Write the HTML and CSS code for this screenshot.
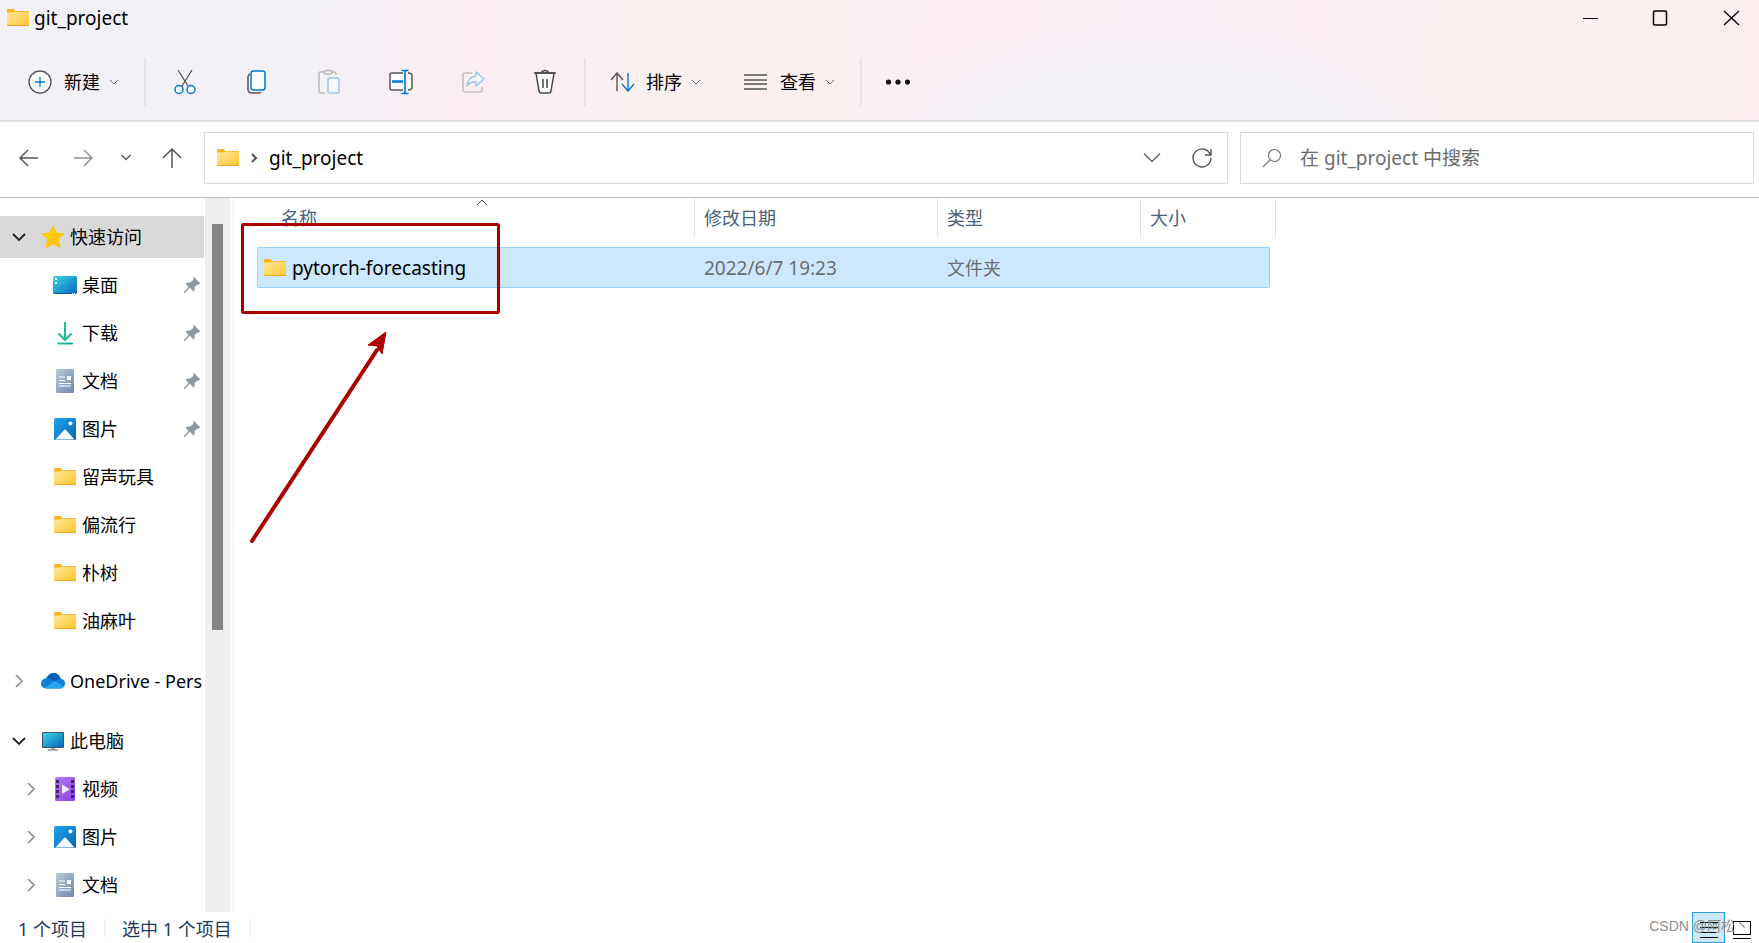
FILE: index.html
```html
<!DOCTYPE html>
<html lang="zh-CN">
<head>
<meta charset="utf-8">
<title>git_project</title>
<link rel="stylesheet" href="styles.css">
</head>
<body>
<svg class="defs" width="0" height="0" aria-hidden="true">
  <defs>
    <linearGradient id="gFolder" x1="0" y1="0" x2="1" y2="1"><stop offset="0" stop-color="#ffe8a0"/><stop offset="1" stop-color="#ffc62f"/></linearGradient>
    <linearGradient id="gScreen" x1="0" y1="0" x2="1" y2="1"><stop offset="0" stop-color="#35d9e4"/><stop offset="1" stop-color="#0a66bd"/></linearGradient>
    <linearGradient id="gDown" x1="0" y1="0" x2="1" y2="0"><stop offset="0" stop-color="#35c98c"/><stop offset="1" stop-color="#12a3a5"/></linearGradient>
    <linearGradient id="gDoc" x1="0" y1="0" x2="1" y2="1"><stop offset="0" stop-color="#b9c9dc"/><stop offset="1" stop-color="#6f8aa8"/></linearGradient>
    <linearGradient id="gPic" x1="0" y1="0" x2="1" y2="1"><stop offset="0" stop-color="#1fa5ec"/><stop offset="1" stop-color="#0a62b8"/></linearGradient>
    <linearGradient id="gVid" x1="0" y1="0" x2="1" y2="1"><stop offset="0" stop-color="#b77bf5"/><stop offset="1" stop-color="#8a3fe0"/></linearGradient>
    <linearGradient id="gStar" x1="0" y1="0" x2="1" y2="1"><stop offset="0" stop-color="#ffe000"/><stop offset="1" stop-color="#ffb41a"/></linearGradient>
    <symbol id="folder" viewBox="0 0 24 20"><path d="M1 3V2q0-1 1-1h5.500l1.500 1.500V5H1z" fill="#fdb51c"/><rect x="1" y="3" width="22" height="15" fill="url(#gFolder)"/><path d="M8 3.500H23" fill="none" stroke="#f5bd3c"/><path d="M1 4.500V1.500h6.500l1 1L7 4.500z" fill="#fdb51c"/><path d="M1 17.500h22" stroke="#f0a51c"/></symbol>
    <symbol id="desktop" viewBox="0 0 24 20"><rect x="0" y="1" width="24" height="18" rx="1.500" fill="url(#gScreen)"/><path d="M2 3h2v2H2zM2 7h2v2H2z" fill="#fff"/><path d="M1 18.500h22" stroke="#075aa0"/><path d="M19 18.500h1M21 18.500h1" stroke="#fff"/></symbol>
    <symbol id="download" viewBox="0 0 24 24"><path d="M12 1v18M5.500 12.500l6.500 6.500 6.500-6.500" fill="none" stroke="#25b894" stroke-width="2"/><rect x="4" y="21.500" width="16" height="2" rx="1" fill="url(#gDown)"/></symbol>
    <symbol id="document" viewBox="0 0 24 24"><rect x="3" y="0" width="18" height="24" rx="1.500" fill="url(#gDoc)"/><path d="M6 8h6M6 11.500h6M6 14.500h12M6 17h12" stroke="#fff" stroke-width="1.200"/><rect x="14" y="7" width="4" height="4" fill="#fff"/></symbol>
    <symbol id="picture" viewBox="0 0 24 24"><rect x="1" y="1" width="22" height="22" rx="1.500" fill="url(#gPic)"/><path d="M2.500 22.500L11 13q1-1 2 0l8.500 9.500z" fill="#f3f9fe"/><circle cx="17.500" cy="6.500" r="2" fill="#fff"/></symbol>
    <symbol id="video" viewBox="0 0 24 24"><rect x="2" y="0" width="20" height="24" rx="1.500" fill="url(#gVid)"/><path d="M4.500 3v20M19.500 3v20" stroke="#402468" stroke-width="3" stroke-dasharray="3 2"/><path d="M9 7.500v9.500l8-4.700z" fill="#f2eaf9"/></symbol>
    <symbol id="star" viewBox="0 0 24 24"><path d="M12 1l3.200 7 7.800.9-5.800 5.100 1.700 8.500L12 18.800 5.100 22.500 6.800 14 1 8.900 8.800 8z" fill="url(#gStar)" stroke="#ffc400" stroke-linejoin="round"/></symbol>
    <symbol id="cloud" viewBox="0 0 24 18"><path d="M5 16.500C1.500 16 0 14 0 11.500 0 8.500 2.500 6.500 5 6.500 6.500 3 9.500 1 12.500 1c3.500 0 6 2 7 5.500 3 .5 4.500 2.500 4.500 5 0 3-2.500 5-5 5z" fill="#0f80d8"/><path d="M6 6C7.500 3 10 1 12.500 1c3.500 0 6 2 7 5.500L14 9z" fill="#0a60b4"/><path d="M3.500 16L14 9l9 5.500q-1.500 2-4 2H6q-1.500 0-2.500-.5z" fill="#28a5ee"/></symbol>
    <symbol id="monitor" viewBox="0 0 24 20"><rect x="1" y="1" width="22" height="16" rx="1" fill="#3f5563"/><rect x="2" y="2" width="20" height="14" fill="url(#gScreen)"/><path d="M10 17h4v1.500h-4z" fill="#9aa5ac"/><path d="M7 19h10" stroke="#566069"/></symbol>
    <symbol id="pin" viewBox="0 0 16 16"><path d="M10 0l6 6-1 1.500-2 .2L10.800 10 10.500 13.500l-1 1-3.800-3.800L1 16H0v-1l4.500-5L1.500 6.800l1-1 4-.6L9.300 3 9 1z" fill="#8e9aa3"/></symbol>
    <symbol id="down" viewBox="0 0 14 14"><path d="M1 4l6 6 6-6" fill="none" stroke="currentColor" stroke-width="1.800"/></symbol>
    <symbol id="right" viewBox="0 0 14 14"><path d="M4 1l6 6-6 6" fill="none" stroke="currentColor" stroke-width="1.600"/></symbol>
    <symbol id="thin" viewBox="0 0 10 10"><path d="M1 3l4 4 4-4" fill="none" stroke="currentColor" stroke-width="1"/></symbol>
  </defs>
</svg>

<div class="window">
  <header class="chrome">
    <div class="titlebar">
      <svg class="ic-folder"><use href="#folder"/></svg>
      <h1 class="title">git_project</h1>
      <div class="controls">
        <button class="control" aria-label="最小化"><svg width="18" height="18"><path d="M2 9.500h15" stroke="#000"/></svg></button>
        <button class="control" aria-label="最大化"><svg width="18" height="18"><rect x="2.500" y="2" width="13" height="14" rx="1.500" fill="none" stroke="#000" stroke-width="1.500"/></svg></button>
        <button class="control" aria-label="关闭"><svg width="18" height="18"><path d="M2 2l15 14M17 2L2 16" stroke="#000" stroke-width="1.300"/></svg></button>
      </div>
    </div>
    <div class="toolbar">
      <button class="tool new"><svg width="24" height="24"><circle cx="12" cy="12" r="11" fill="#fbfbfd" stroke="#555" stroke-width="1.300"/><path d="M12 7v10M7 12h10" stroke="#0078d4" stroke-width="1.300"/></svg><span>新建</span><svg class="ic-thin"><use href="#thin"/></svg></button>
      <span class="rule"></span>
      <div class="icons">
        <button class="tool" aria-label="剪切"><svg width="24" height="26"><path d="M5 1l10 16M19 1L9 17" stroke="#555" stroke-width="1.300"/><g fill="#fbfbfd" stroke="#0078d4" stroke-width="1.500"><circle cx="6" cy="20.500" r="4"/><circle cx="18" cy="20.500" r="4"/></g></svg></button>
        <button class="tool" aria-label="复制"><svg width="24" height="26"><path d="M5 5q-2 1-2 3v12q0 4 4 4h7q1.500 0 2-1" fill="none" stroke="#555" stroke-width="1.500"/><rect x="6" y="2" width="14" height="19" rx="2.500" fill="#fbfbfd" stroke="#0078d4" stroke-width="1.500"/></svg></button>
        <button class="tool" aria-label="粘贴"><svg width="24" height="26"><path d="M7 3H3Q2 3 2 4.500v18Q2 24 3.500 24H8M14 3h3.500q1.500 0 1.500 3" fill="none" stroke="#bdb9c0" stroke-width="1.500"/><rect x="7" y="1.500" width="8" height="3.500" rx="1.700" fill="none" stroke="#bdb9c0" stroke-width="1.500"/><rect x="11" y="9" width="11" height="15" rx="1.500" fill="#f8f8fc" stroke="#99c8ee" stroke-width="1.500"/></svg></button>
        <button class="tool" aria-label="重命名"><svg width="26" height="26"><path d="M15 4H4Q2 4 2 6v13q0 2 2 2h11M20 4q4 0 4 3v11q0 3-4 3" fill="#fbfbfd" stroke="#555" stroke-width="1.500"/><path d="M4 12.500h11" stroke="#0078d4" stroke-width="2.500"/><path d="M17 2v22M13.500 1.500h7M13.500 24.500h7" stroke="#0078d4" stroke-width="1.600"/></svg></button>
        <button class="tool" aria-label="共享"><svg width="24" height="26"><path d="M11 4H4Q2 4 2 6v15q0 2 2 2h15q2 0 2-2v-3" fill="none" stroke="#c3bcc2" stroke-width="1.500"/><path d="M15 3l8 7-8 7v-4q-6-.5-9 4 1-9 9-10z" fill="#f8f6fb" stroke="#99c8ee" stroke-width="1.500" stroke-linejoin="round"/></svg></button>
        <button class="tool" aria-label="删除"><svg width="24" height="26"><path d="M3 4l3 18q.5 2 2 2h8q1.500 0 2-2l3-18z" fill="#fbfbfd" stroke="#4a4a4a" stroke-width="1.500"/><path d="M1 4h22M8.500 4Q9 1.500 12 1.500T15.500 4M10 10v9M14 10v9" fill="none" stroke="#4a4a4a" stroke-width="1.500"/></svg></button>
      </div>
      <span class="rule"></span>
      <button class="tool sort"><svg width="25" height="20"><path d="M7 19V1M1 8l6-7 6 7" fill="none" stroke="#555" stroke-width="1.400"/><path d="M18 1v18M12 12l6 7 6-7" fill="none" stroke="#0078d4" stroke-width="1.400"/></svg><span>排序</span><svg class="ic-thin"><use href="#thin"/></svg></button>
      <button class="tool view"><svg width="25" height="18"><path d="M1 2h23M1 7h23M1 11h23M1 16h23" stroke="#555" stroke-width="1.300"/></svg><span>查看</span><svg class="ic-thin"><use href="#thin"/></svg></button>
      <span class="rule"></span>
      <button class="tool more" aria-label="更多"><svg width="26" height="8"><g fill="#111"><circle cx="3.500" cy="4" r="2.600"/><circle cx="13" cy="4" r="2.600"/><circle cx="22.500" cy="4" r="2.600"/></g></svg></button>
    </div>
  </header>

  <nav class="navbar" aria-label="导航">
    <div class="moves">
      <button class="move" aria-label="后退"><svg width="20" height="20"><path d="M19 10H2M9 2l-8 8 8 8" fill="none" stroke="#555" stroke-width="1.500"/></svg></button>
      <button class="move" aria-label="前进"><svg width="20" height="20"><path d="M1 10h17M11 2l8 8-8 8" fill="none" stroke="#8e8e8e" stroke-width="1.500"/></svg></button>
      <button class="move recent" aria-label="最近"><svg width="12" height="12"><path d="M1.500 3L6 7.500 10.500 3" fill="none" stroke="#555" stroke-width="1.300"/></svg></button>
      <button class="move up" aria-label="上移"><svg width="20" height="20"><path d="M10 20V1M1 10l9-9 9 9" fill="none" stroke="#555" stroke-width="1.500"/></svg></button>
    </div>
    <div class="address">
      <svg class="ic-folder"><use href="#folder"/></svg>
      <svg class="crumb" width="8" height="10"><path d="M2 1l4 4-4 4" fill="none" stroke="#555" stroke-width="2"/></svg>
      <a class="path" href="#">git_project</a>
      <button class="move drop" aria-label="历史"><svg width="18" height="12"><path d="M1 1.500l8 8 8-8" fill="none" stroke="#666" stroke-width="1.400"/></svg></button>
      <button class="move" aria-label="刷新"><svg width="22" height="22"><path d="M19.500 8A9 9 0 1 0 20 11M20 2v6h-6" fill="none" stroke="#555" stroke-width="1.400"/></svg></button>
    </div>
    <label class="search">
      <svg width="20" height="20"><circle cx="12.500" cy="7.500" r="6" fill="none" stroke="#777" stroke-width="1.200"/><path d="M8 12l-7 7" stroke="#777" stroke-width="1.200"/></svg>
      <input class="query" type="text" aria-label="搜索" placeholder="在 git_project 中搜索">
    </label>
  </nav>

  <main class="body">
    <aside class="sidebar">
      <ul class="tree">
        <li class="node root selected"><svg class="twist open"><use href="#down"/></svg><svg class="ic"><use href="#star"/></svg><span>快速访问</span></li>
        <li class="node"><svg class="ic"><use href="#desktop"/></svg><span>桌面</span><svg class="pin"><use href="#pin"/></svg></li>
        <li class="node"><svg class="ic"><use href="#download"/></svg><span>下载</span><svg class="pin"><use href="#pin"/></svg></li>
        <li class="node"><svg class="ic"><use href="#document"/></svg><span>文档</span><svg class="pin"><use href="#pin"/></svg></li>
        <li class="node"><svg class="ic"><use href="#picture"/></svg><span>图片</span><svg class="pin"><use href="#pin"/></svg></li>
        <li class="node"><svg class="ic"><use href="#folder"/></svg><span>留声玩具</span></li>
        <li class="node"><svg class="ic"><use href="#folder"/></svg><span>偏流行</span></li>
        <li class="node"><svg class="ic"><use href="#folder"/></svg><span>朴树</span></li>
        <li class="node"><svg class="ic"><use href="#folder"/></svg><span>油麻叶</span></li>
        <li class="node root"><svg class="twist"><use href="#right"/></svg><svg class="ic"><use href="#cloud"/></svg><span>OneDrive - Pers</span></li>
        <li class="node root"><svg class="twist open"><use href="#down"/></svg><svg class="ic"><use href="#monitor"/></svg><span>此电脑</span></li>
        <li class="node branch"><svg class="twist"><use href="#right"/></svg><svg class="ic"><use href="#video"/></svg><span>视频</span></li>
        <li class="node branch"><svg class="twist"><use href="#right"/></svg><svg class="ic"><use href="#picture"/></svg><span>图片</span></li>
        <li class="node branch"><svg class="twist"><use href="#right"/></svg><svg class="ic"><use href="#document"/></svg><span>文档</span></li>
      </ul>
      <div class="scrollbar"><div class="thumb"></div></div>
    </aside>
    <section class="files">
      <table class="list">
        <colgroup><col class="c-name"><col class="c-date"><col class="c-type"><col class="c-size"><col class="c-edge"></colgroup>
        <thead><tr>
          <th class="name">名称<svg class="asc" width="12" height="7"><path d="M1 6l5-5 5 5" fill="none" stroke="#555"/></svg></th>
          <th>修改日期</th><th>类型</th><th colspan="2">大小</th>
        </tr></thead>
        <tbody><tr>
          <td class="file"><div class="entry"><svg class="ic-folder"><use href="#folder"/></svg><span class="latin">pytorch-forecasting</span></div></td>
          <td class="latin">2022/6/7 19:23</td><td>文件夹</td><td class="last"></td>
        </tr></tbody>
      </table>
      <svg class="marks" width="270" height="330" aria-hidden="true">
        <rect x="8.500" y="2.500" width="256" height="88" rx="1" fill="none" stroke="#ab0000" stroke-width="3"/>
        <path d="M18 319L143 128" stroke="#ab0000" stroke-width="4" stroke-linecap="round"/>
        <path d="M152 110l-4 22-5-8-9-1z" fill="#ab0000" stroke="#ab0000"/>
      </svg>
    </section>
  </main>

  <footer class="status">
    <span class="count">1 个项目</span>
    <span class="count">选中 1 个项目</span>
    <div class="modes">
      <button class="mode on" aria-label="详细信息"><svg width="20" height="20"><path d="M1 2.500h18M1 7.500h18M1 12.500h18M1 17.500h18" stroke="#000"/></svg></button>
      <button class="mode" aria-label="大图标"><svg width="20" height="20"><rect x="1.500" y="1.500" width="17" height="13" fill="none" stroke="#000"/><path d="M1 18.500h18" stroke="#000"/></svg></button>
      <span class="watermark">CSDN @阿松丶</span>
    </div>
  </footer>
</div>
</body>
</html>
```

FILE: styles.css
```css
* { box-sizing: border-box; }
body {
  margin: 0;
  background: #fff;
  color: #000;
  font: 18px/24px "Noto Sans", "Noto Sans CJK SC", sans-serif;
}
.defs { position: absolute; }
button { margin: 0; padding: 0; border: 0; background: none; font: inherit; color: inherit; }
svg { display: block; flex: none; }
.latin { font-size: 19px; }
.window { display: flex; flex-direction: column; height: 100vh; overflow: hidden; }

.chrome {
  flex: none;
  border-bottom: 2px solid #e0dbe1;
  background:
    radial-gradient(ellipse 17% 90% at 66% 110%, #f4f1f8 60%, #f4f1f800 100%),
    linear-gradient(95deg, #f2f1f8 0%, #f3f1f8 17%, #faeef3 26%, #faf0ef 40%, #faf0ef 46%, #faeef3 53%, #faeef6 66%, #faeef4 74%, #faf0f0 82%, #faf0ee 90%, #faeef0 100%);
}
.titlebar { display: flex; align-items: center; height: 36px; padding-left: 6px; }
.ic-folder { width: 24px; height: 20px; }
.title { margin: 0 auto 0 4px; font-size: 19px; font-weight: 400; line-height: 24px; }
.controls { display: flex; }
.control { display: grid; place-items: center; width: 70px; height: 36px; }
.control:last-child { width: 56px; margin-left: 8px; }

.toolbar { display: flex; align-items: center; height: 84px; padding: 8px 0 0 28px; }
.tool { display: flex; align-items: center; }
.tool span { margin: 0 9px 0 12px; }
.new { width: 116px; }
.ic-thin { width: 10px; height: 10px; color: #666; }
.rule { width: 2px; height: 48px; background: #e9e3e9; }
.icons { display: flex; width: 438px; padding-left: 3px; }
.icons .tool { justify-content: center; width: 72px; }
.sort { width: 133px; margin-left: 24px; }
.sort span { margin-left: 11px; }
.view { width: 117px; }
.more { margin-left: 23px; }

.navbar { display: flex; align-items: center; flex: none; height: 76px; padding: 0 5px 4px 0; border-bottom: 1px solid #bdbdbd; }
.moves { display: flex; flex: none; width: 204px; padding-left: 18px; }
.move { display: grid; place-items: center; width: 22px; height: 24px; }
.moves .move { margin-right: 32px; }
.moves .recent { width: 14px; margin: 0 28px 0 -7px; }
.moves .up { margin-right: 0; }
.address { display: flex; align-items: center; flex: 1; height: 52px; padding: 0 14px 0 11px; border: 1px solid #d9d9d9; }
.crumb { margin: 0 11px 0 10px; }
.path { margin-right: auto; color: #000; font-size: 19px; text-decoration: none; }
.drop { margin-right: 28px; }
.search { display: flex; align-items: center; flex: 0 1 514px; height: 52px; margin-left: 12px; padding-left: 21px; border: 1px solid #d9d9d9; }
.query { flex: 1; min-width: 0; margin-left: 18px; padding: 0; border: 0; outline: 0; background: none; font: inherit; font-size: 19px; }
.query::placeholder { color: #6d6d6d; opacity: 1; }

.body { display: flex; flex: 1; min-height: 0; }
.sidebar { display: flex; flex: none; width: 234px; border-right: 2px solid #f6f6f6; }
.tree { flex: 1; min-width: 0; margin: 0; padding: 18px 0 0; overflow: hidden; list-style: none; }
.node { display: flex; align-items: center; height: 48px; padding-left: 53px; white-space: nowrap; }
.root { margin-top: 12px; padding-left: 12px; }
.branch { padding-left: 24px; }
.selected { height: 42px; margin: 0 1px 3px 0; background: #d9d9d9; }
.ic { width: 24px; height: 24px; }
.node span { margin-left: 5px; }
.twist { width: 14px; height: 14px; margin-right: 15px; color: #8c8c8c; }
.open { color: #222; }
.pin { width: 16px; height: 16px; margin: 0 5px 0 auto; }
.scrollbar { flex: none; width: 25px; margin-right: 2px; padding: 26px 7px 0; background: #efefef; }
.thumb { height: 406px; background: #858585; }

.files { position: relative; flex: 1; min-width: 0; padding-left: 23px; }
.list { border-collapse: separate; border-spacing: 0; table-layout: fixed; width: 1019px; }
.c-name { width: 438px; }
.c-date { width: 243px; }
.c-type { width: 203px; }
.c-size { width: 129px; }
.c-edge { width: 6px; }
.list th { position: relative; height: 40px; padding: 0 9px; border-right: 1px solid #e5e5e5; color: #4c607a; font-weight: 400; text-align: left; }
.list .name { padding-left: 24px; }
.asc { position: absolute; top: 1px; left: 50%; }
.list td { height: 41px; padding: 0 9px; border: 1px solid #99d1ff; border-width: 1px 0; background: #cce8ff; color: #6d6d6d; }
.list thead::after { content: ""; display: block; height: 9px; }
.list .file { padding-left: 5px; border-left-width: 1px; border-radius: 2px 0 0 2px; color: #000; }
.list .last { border-right-width: 1px; border-radius: 0 2px 2px 0; }
.entry { display: flex; align-items: center; gap: 5px; }
.marks { position: absolute; top: 24px; left: 0; }

.status { display: flex; flex: none; height: 31px; color: #1e395b; }
.count { align-self: center; height: 18px; padding: 0 17px 0 18px; border-right: 2px solid #f2f2f2; line-height: 20px; }
.count + .count { padding-left: 16px; }
.modes { position: relative; display: flex; margin-left: auto; padding-right: 1px; }
.mode { display: grid; place-items: center; width: 33px; padding-top: 5px; }
.on { border: 1px solid #26a0da; background: #cbe8f6; }
.watermark { position: absolute; right: 10px; top: 4px; color: #8c8c8c; font: 14px/20px "Liberation Sans", "Noto Sans CJK SC", sans-serif; white-space: nowrap; pointer-events: none; }
```
